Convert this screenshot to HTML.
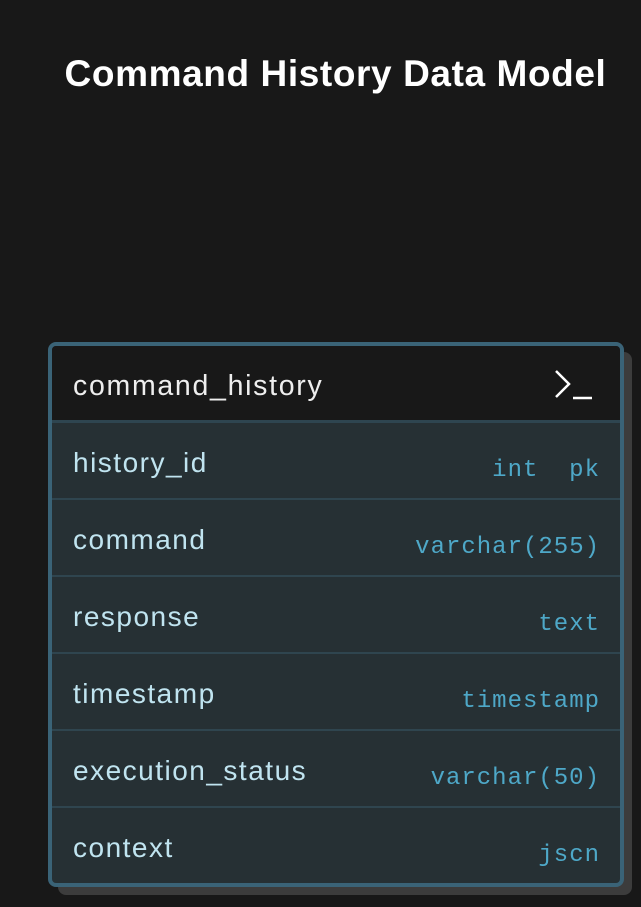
<!DOCTYPE html>
<html><head><style>
body{margin:0;width:641px;height:907px;background:#181818;overflow:hidden;font-family:"Liberation Sans",sans-serif;position:relative}
h1{position:absolute;left:0;width:671px;top:53px;margin:0;text-align:center;color:#fff;font-size:37px;font-weight:bold;letter-spacing:0.6px}
.shadow{position:absolute;left:58px;top:352px;width:574px;height:543px;background:#3c3c3c;border-radius:8px}
.box{position:absolute;left:48px;top:342px;width:568px;height:537px;border:4px solid #3a6377;border-radius:8px;background:#263034;overflow:hidden}
.hdr{height:74px;background:#181818;border-bottom:3px solid #2e4550;position:relative}
.hdr span{position:absolute;left:21px;top:24px;color:#eee;font-size:28.5px;letter-spacing:1.7px}
.row{height:75px;border-bottom:2px solid #2f454f;position:relative}
.row:last-child{border-bottom:none}
.n{position:absolute;left:21px;top:24px;color:#c0e4f0;font-size:28px;letter-spacing:1.5px}
.t{position:absolute;right:20px;top:34px;color:#4ea8c8;font-family:"Liberation Mono",monospace;font-size:24px;letter-spacing:1px}
</style></head><body>
<h1>Command History Data Model</h1>
<div class="shadow"></div>
<div class="box">
<div class="hdr"><span>command_history</span>
<svg style="position:absolute;left:500px;top:22px" width="44" height="34"><path d="M4 3 L17 16 L4 29" stroke="#fff" stroke-width="2.5" fill="none"/><path d="M21 30 H40" stroke="#fff" stroke-width="2.5"/></svg></div>
<div class="row"><span class="n">history_id</span><span class="t">int&nbsp; pk</span></div>
<div class="row"><span class="n">command</span><span class="t">varchar(255)</span></div>
<div class="row"><span class="n">response</span><span class="t">text</span></div>
<div class="row"><span class="n">timestamp</span><span class="t">timestamp</span></div>
<div class="row"><span class="n">execution_status</span><span class="t">varchar(50)</span></div>
<div class="row"><span class="n">context</span><span class="t">jscn</span></div>
</div>
</body></html>
